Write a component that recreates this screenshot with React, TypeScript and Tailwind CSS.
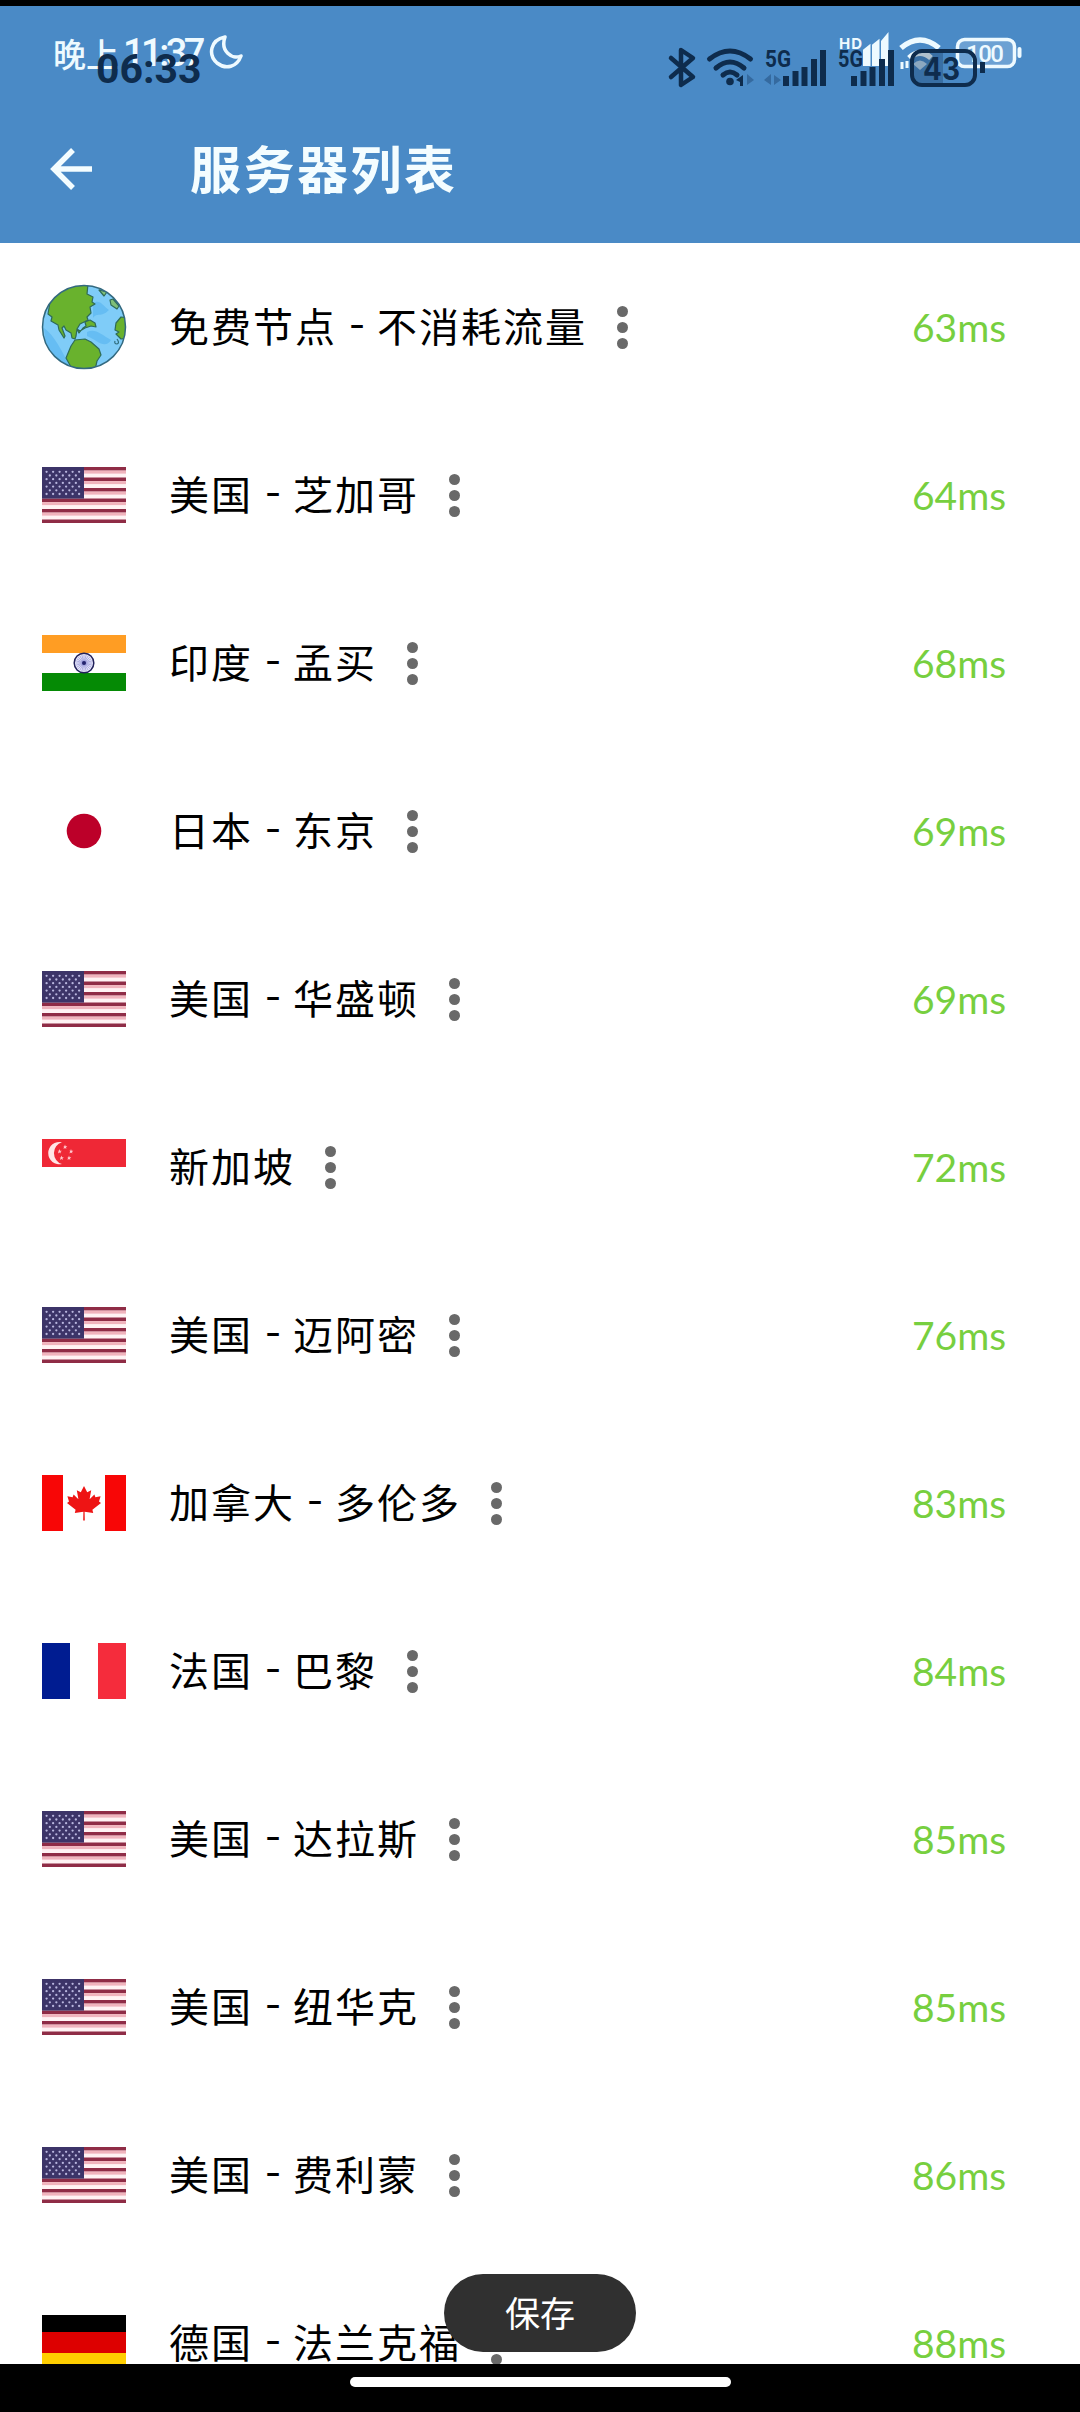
import React from 'react';

const NAVY = '#0e2c4d';

function UsFlag() {
  return (
    <svg className="block h-14 w-[84px]" viewBox="0 0 84 56">
      <rect width="84" height="56" fill="#fff3f4" />
      {[0, 1, 2, 3, 4, 5].map((i) => (
        <g key={i}>
          <rect y={i * 10.5} width="84" height="3.6" fill="#8f2c46" />
          {i < 5 && <rect y={i * 10.5 + 3.6} width="84" height="3" fill="#f0b4bd" />}
        </g>
      ))}
      <rect width="42" height="31.6" fill="#3c3468" />
      {[0, 1, 2, 3, 4, 5, 6].map((r) =>
        [0, 1, 2, 3, 4, 5].slice(0, r % 2 === 0 ? 6 : 5).map((c) => (
          <circle key={`${r}-${c}`} cx={4.6 + c * 6.5 + (r % 2) * 3.25} cy={4.8 + r * 3.7} r="1.15" fill="#b9b6de" />
        )),
      )}
    </svg>
  );
}

function Globe() {
  return (
    <svg className="block h-[86px] w-[86px]" viewBox="0 0 86 86">
      <defs>
        <clipPath id="globe">
          <circle cx="43" cy="43" r="41.5" />
        </clipPath>
      </defs>
      <circle cx="43" cy="43" r="41.5" fill="#7fccf8" />
      <g clipPath="url(#globe)">
        <path d="M3 44C14 52 20 66 30 84L6 70ZM52 20C58 14 62 22 68 26C60 34 56 28 52 34ZM46 48C54 44 60 50 70 56C64 66 56 56 46 52Z" fill="#66bdf3" />
        <g stroke="#2f6b57" strokeWidth="1.2" strokeLinejoin="round">
          <path d="M7 30L10 12L30 0H47L46 10L52 13L51 18L54 20L49 23L50 29L46 33L47 36L39 40L36 45L38 49L42 44L45 42L44 38L49 36L54 39L55 43L50 42L44 44L39 47L36 45L35 52L34 55L31 54L30 49L25 46L23 42L21 44L24 52L23 54L18 46L17 41L10 37L11 33Z" fill="#69b22d" />
          <path d="M30 62L34 56L44 55L50 58L58 65L60 71L56 77L54 86H41L30 83L25 74Z" fill="#69b22d" />
          <path d="M75 39L80 33L88 34V54L80 55L75 50L78 48L74 46Z" fill="#69b22d" />
          <path d="M58 6L66 8L63 12Z" fill="#7fbf78" />
          <path d="M69 16L72 15L78 22L76 25L70 21Z" fill="#7fbf78" />
        </g>
        <path d="M76 55Q79 59 76 60Q73 60 74 57" fill="none" stroke="#2f6b7b" strokeWidth="1.2" />
      </g>
      <circle cx="43" cy="43" r="41.5" fill="none" stroke="#33697f" strokeWidth="1.5" />
    </svg>
  );
}

function IndiaFlag() {
  return (
    <svg className="block h-14 w-[84px]" viewBox="0 0 84 56">
      <rect width="84" height="18" fill="#ff9d23" />
      <rect y="38" width="84" height="18" fill="#058a05" />
      <circle cx="42" cy="28" r="9.8" fill="#e6e6fa" stroke="#22225c" strokeWidth="1.5" />
      {[0, 1, 2, 3, 4, 5, 6, 7, 8, 9, 10, 11].map((i) => (
        <path key={i} d="M42 19.8V36.2" stroke="#7c7ccc" strokeWidth="0.5" transform={`rotate(${i * 15} 42 28)`} />
      ))}
      <circle cx="42" cy="28" r="2" fill="#22226c" />
    </svg>
  );
}

function JapanFlag() {
  return (
    <svg className="block h-14 w-[84px]" viewBox="0 0 84 56">
      <circle cx="42" cy="28" r="17.3" fill="#bc0029" />
    </svg>
  );
}

function SingaporeFlag() {
  return (
    <svg className="block h-14 w-[84px]" viewBox="0 0 84 56">
      <rect width="84" height="28" fill="#ef2836" />
      <path d="M20 3.2A11.2 11.2 0 1 0 20 25A11.4 11.4 0 0 1 20 3.2Z" fill="#ffe5e6" />
      {[[23, 8], [29, 12.5], [27, 19], [19.5, 19], [17.5, 12.5]].map(([x, y]) => (
        <path key={x} d="M0-2.4L.6-.8L2.3-.7L1 .4L1.4 2L0 1.1L-1.4 2L-1-.4L-2.3-.7L-.6-.8Z" fill="#ffc6cc" transform={`translate(${x} ${y})`} />
      ))}
    </svg>
  );
}

function CanadaFlag() {
  return (
    <svg className="block h-14 w-[84px]" viewBox="0 0 84 56">
      <rect width="21" height="56" fill="#f80606" />
      <rect x="63" width="21" height="56" fill="#f80606" />
      <path
        d="M42 11L45.2 17.2L49.2 15.2L47.6 24.2L52.4 19.6L53.4 22.2L58.6 21.2L57 26.6L59 28L50.4 34.8L51.2 38L42.6 36.8L42.8 45.6H41.2L41.4 36.8L32.8 38L33.6 34.8L25 28L27 26.6L25.4 21.2L30.6 22.2L31.6 19.6L36.4 24.2L34.8 15.2L38.8 17.2Z"
        fill="#ee1414"
      />
    </svg>
  );
}

function FranceFlag() {
  return (
    <div className="flex h-14 w-[84px] justify-between">
      <div className="w-7 bg-[#001c91]" />
      <div className="w-7 bg-[#f52c3c]" />
    </div>
  );
}

function GermanyFlag() {
  return (
    <div className="flex h-14 w-[84px] flex-col">
      <div className="h-[17px] bg-black" />
      <div className="h-[21px] bg-[#dd0000]" />
      <div className="h-[18px] bg-[#ffce00]" />
    </div>
  );
}

const FLAGS = {
  globe: Globe,
  us: UsFlag,
  in: IndiaFlag,
  jp: JapanFlag,
  sg: SingaporeFlag,
  ca: CanadaFlag,
  fr: FranceFlag,
  de: GermanyFlag,
};

type Server = { flag: keyof typeof FLAGS; name: string; city?: string; ping: string };

const SERVERS: Server[] = [
  { flag: 'globe', name: '免费节点', city: '不消耗流量', ping: '63ms' },
  { flag: 'us', name: '美国', city: '芝加哥', ping: '64ms' },
  { flag: 'in', name: '印度', city: '孟买', ping: '68ms' },
  { flag: 'jp', name: '日本', city: '东京', ping: '69ms' },
  { flag: 'us', name: '美国', city: '华盛顿', ping: '69ms' },
  { flag: 'sg', name: '新加坡', ping: '72ms' },
  { flag: 'us', name: '美国', city: '迈阿密', ping: '76ms' },
  { flag: 'ca', name: '加拿大', city: '多伦多', ping: '83ms' },
  { flag: 'fr', name: '法国', city: '巴黎', ping: '84ms' },
  { flag: 'us', name: '美国', city: '达拉斯', ping: '85ms' },
  { flag: 'us', name: '美国', city: '纽华克', ping: '85ms' },
  { flag: 'us', name: '美国', city: '费利蒙', ping: '86ms' },
  { flag: 'de', name: '德国', city: '法兰克福', ping: '88ms' },
];

function ServerRow({ server }: { server: Server }) {
  const Flag = FLAGS[server.flag];
  return (
    <li className="flex h-[168px] shrink-0 items-center pl-[42px]">
      <div className="flex w-[127px] shrink-0 items-center">
        <div className="flex w-[84px] items-center justify-center">
          <div className="shrink-0">
            <Flag />
          </div>
        </div>
      </div>
      <div className="flex items-center pb-1 text-[40px] leading-none tracking-[2px] whitespace-nowrap text-black">
        <span>{server.name}</span>
        {server.city && <span className="w-10 text-center font-['Inter',sans-serif] text-[36px] leading-none tracking-normal">-</span>}
        {server.city && <span>{server.city}</span>}
      </div>
      <div className="ml-[30px] flex flex-col gap-[5px]">
        <span className="h-[11px] w-[11px] rounded-full bg-[#696969]" />
        <span className="h-[11px] w-[11px] rounded-full bg-[#696969]" />
        <span className="h-[11px] w-[11px] rounded-full bg-[#696969]" />
      </div>
      <span className="ml-auto w-[168px] font-['Lato',sans-serif] text-[39px] leading-none text-[#77cf3f]">{server.ping}</span>
    </li>
  );
}

function LightStatusBar() {
  return (
    <div className="absolute inset-x-0 top-0 flex h-[100px] items-start justify-between pl-[53px] text-[#eefaff]">
      <div className="flex pt-[33px]">
        <div className="flex w-[152px] items-center whitespace-nowrap font-medium">
          <span className="text-[33px] leading-[38px]">晚上</span>
          <span className="ml-1 font-['Roboto',sans-serif] text-[38px] leading-[40px] tracking-[-3.500px]">11:37</span>
        </div>
        <svg className="mt-px ml-[3px] h-9 w-9" viewBox="0 0 36 36" fill="none" stroke="currentColor" strokeWidth="3.500" strokeLinejoin="round">
          <path d="M17 3C2 6 0 21 9 29C18 36 29 33 33 22C24 26 12 17 17 3Z" />
        </svg>
      </div>
      <svg className="h-[100px] w-[260px]" viewBox="820 0 260 100" fill="none">
        <text x="839" y="49" fontSize="15" fontWeight="700" fill="currentColor" fontFamily="Inter, sans-serif" textLength="23">HD</text>
        <path d="M865.500 66V51L868 49V66M874.500 66V46L877 44V66M883.500 66V42L886 39V66" stroke="currentColor" strokeWidth="5" />
        <path d="M901 48Q920 32 939 48M909 58Q920 48 931 58" stroke="currentColor" strokeWidth="5.500" />
        <path d="M913 64Q920 57 927 64L920 70Z" fill="currentColor" fillOpacity="0.700" />
        <path d="M902 62V69M907 61V68" stroke="currentColor" strokeWidth="3" />
        <rect x="957.500" y="39.500" width="57" height="27" rx="7" fill="#8db7df" fillOpacity="0.500" stroke="currentColor" strokeWidth="3.500" />
        <text x="966" y="61.500" fontSize="24" fontWeight="500" fill="currentColor" fontFamily="Roboto, sans-serif" textLength="38">100</text>
        <path d="M1019.500 49V56" stroke="currentColor" strokeWidth="4" strokeLinecap="round" />
      </svg>
    </div>
  );
}

function DarkStatusBar() {
  return (
    <div className="absolute inset-x-0 top-0 flex h-[100px] items-start justify-between pl-24 text-[#0e2c4d]">
      <span className="mt-[49px] font-['Roboto',sans-serif] text-[41px] leading-10 font-bold">06:33</span>
      <svg className="h-[100px] w-[420px]" viewBox="660 0 420 100" fill="none" stroke="currentColor">
        <path d="M671 58L693 77L681 85V50L693 58L671 77" strokeWidth="4.500" strokeLinejoin="round" strokeLinecap="round" />
        <path d="M709.500 59Q730 43 750.500 59M716 68Q730 56 744 68M723 75Q730 69 737 75" strokeWidth="5" strokeLinecap="round" />
        <circle cx="730" cy="81.500" r="3.800" fill="currentColor" stroke="none" />
        <path d="M736 80L743 75V86H740V82Z" fill="currentColor" stroke="none" />
        <path d="M747 74L754 80L747 85Z" fill="#356a9f" stroke="none" />
        <path d="M771 74V85L764 80ZM774 75L781 80L774 85Z" fill="#356a9f" stroke="none" />
        <g fill="currentColor" stroke="none" fontFamily="Roboto, sans-serif" fontWeight="700" fontSize="24">
          <text x="765" y="67" textLength="26" lengthAdjust="spacingAndGlyphs">5G</text>
          <text x="838" y="67" textLength="25" lengthAdjust="spacingAndGlyphs">5G</text>
        </g>
        <path d="M786 86V76M795.500 86V71M804.500 86V67M814 86V59M823 86V50" strokeWidth="6" />
        <path d="M854 86V76M863.500 86V71M872.500 86V67M882 86V59M891 86V50" strokeWidth="6" />
        <rect x="912" y="51" width="63" height="34" rx="10" strokeWidth="4" />
        <path d="M914 53H943V83H922Q914 83 914 75Z" fill={NAVY} fillOpacity="0.280" stroke="none" />
        <text x="923" y="79.500" fill="currentColor" stroke="none" fontFamily="Inter, sans-serif" fontWeight="700" fontSize="31" textLength="37" lengthAdjust="spacingAndGlyphs">43</text>
        <path d="M982.500 62V73" strokeWidth="5" />
      </svg>
    </div>
  );
}

export default function App() {
  return (
    <div className="flex h-[2412px] w-[1080px] flex-col overflow-hidden bg-white font-['Noto_Sans_CJK_SC',sans-serif]">
      <div className="h-1.5 shrink-0 bg-black" />
      <header className="flex h-[237px] shrink-0 flex-col bg-[#4a8ac6]">
        <div className="relative -mt-1.5 h-[100px] shrink-0">
          <LightStatusBar />
          <DarkStatusBar />
        </div>
        <div className="flex h-[137px] items-center pl-[49px] text-[#f4fdff]">
          <svg className="h-[44px] w-[44px]" viewBox="0 0 44 44" fill="none" stroke="currentColor" strokeWidth="5.500">
            <path d="M43 22H5M24 3L5 22L24 41" />
          </svg>
          <h1 className="ml-[97px] pb-[3px] text-[51px] leading-none font-bold tracking-[2.500px]">服务器列表</h1>
        </div>
      </header>
      <ul className="flex h-[2121px] shrink-0 flex-col overflow-hidden">
        {SERVERS.map((server) => (
          <ServerRow key={`${server.name}${server.city}`} server={server} />
        ))}
      </ul>
      <footer className="relative flex h-12 shrink-0 justify-center bg-black pt-[13px]">
        <div className="h-2.5 w-[381px] rounded-full bg-white" />
        <button className="absolute -top-[90px] left-[444px] flex h-[78px] w-48 items-center justify-center rounded-full bg-[#303030] pb-1 text-[35px] leading-none text-white">
          保存
        </button>
      </footer>
    </div>
  );
}
